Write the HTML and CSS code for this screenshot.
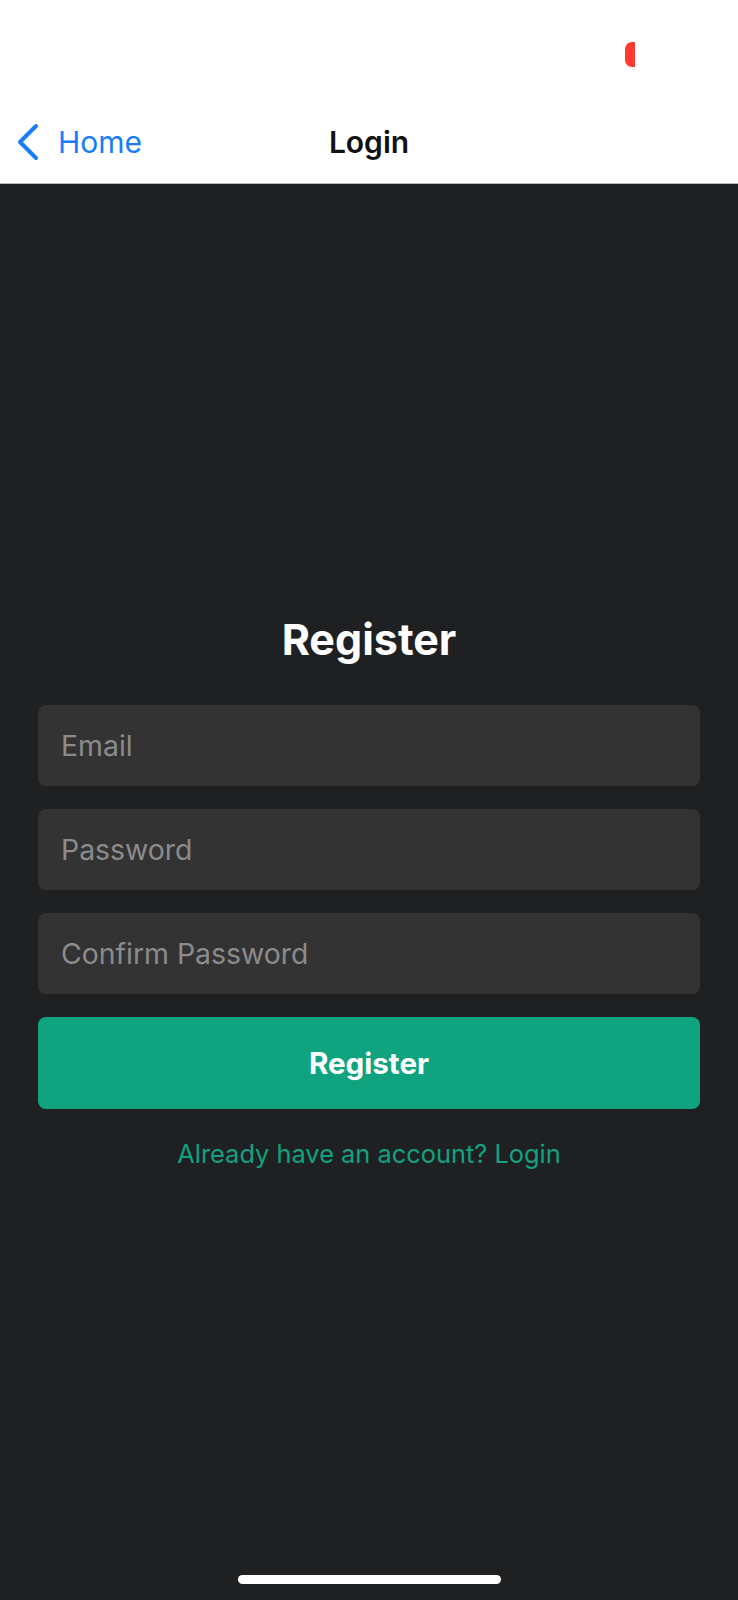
FILE: index.html
```html
<!DOCTYPE html>
<html lang="en">
<head>
<meta charset="utf-8">
<title>Login</title>
<link rel="stylesheet" href="styles.css">
</head>
<body>
<div class="screen">
  <header class="header">
    <div class="status-bar">
      <span class="rec-pill"></span>
    </div>
    <nav class="nav-bar">
      <a class="back" href="#">
        <svg class="chevron" width="26" height="40" viewBox="0 0 26 40" aria-hidden="true">
          <path d="M21 4 L5 20 L21 36" fill="none" stroke="#1a7df5" stroke-width="4" stroke-linecap="round" stroke-linejoin="round"/>
        </svg>
        <span class="back-label">Home</span>
      </a>
      <div class="nav-title">Login</div>
      <div class="nav-spacer"></div>
    </nav>
  </header>
  <main class="main">
    <form class="form">
      <h1 class="form-title">Register</h1>
      <input class="field" type="email" placeholder="Email">
      <input class="field" type="password" placeholder="Password">
      <input class="field" type="password" placeholder="Confirm Password">
      <button class="btn" type="button">Register</button>
      <a class="switch-link" href="#">Already have an account? Login</a>
    </form>
    <div class="home-indicator"></div>
  </main>
</div>
</body>
</html>
```
FILE: styles.css
```css
* { box-sizing: border-box; }
html, body { margin: 0; padding: 0; }
body {
  width: 738px;
  height: 1600px;
  background: #1f2022;
  font-family: Inter, "Noto Sans", "Liberation Sans", sans-serif;
  overflow: hidden;
}
.screen {
  display: flex;
  flex-direction: column;
  height: 1600px;
}
.header {
  background: #ffffff;
  border-bottom: 1px solid #b9b9bb;
  height: 184px;
  display: flex;
  flex-direction: column;
}
.status-bar {
  height: 95px;
  display: flex;
  justify-content: flex-end;
  align-items: flex-start;
  padding-top: 42px;
  padding-right: 103px;
}
.rec-pill {
  display: block;
  width: 10px;
  height: 25px;
  background: #ff3b30;
  border-radius: 7px 0 0 7px;
}
.nav-bar {
  flex: 1;
  display: grid;
  grid-template-columns: 1fr auto 1fr;
  align-items: center;
  padding-top: 5px;
}
.back {
  display: flex;
  align-items: center;
  gap: 17px;
  padding-left: 15px;
  text-decoration: none;
  color: #1a7df5;
}
.chevron { display: block; }
.back-label {
  font-size: 30px;
  line-height: 36px;
  font-weight: 400;
}
.nav-title {
  font-size: 30px;
  line-height: 36px;
  font-weight: 600;
  color: #111111;
}
.main {
  flex: 1;
  display: flex;
  flex-direction: column;
  padding: 430px 38px 16px;
}
.form {
  display: flex;
  flex-direction: column;
  gap: 23px;
}
.form-title {
  margin: 0 0 18px;
  text-align: center;
  color: #ffffff;
  font-size: 43px;
  line-height: 50px;
  font-weight: 700;
}
.field {
  height: 81px;
  width: 100%;
  border: none;
  outline: none;
  border-radius: 8px;
  background: #333334;
  padding: 0 23px;
  font-family: inherit;
  font-size: 28.4px;
  color: #ffffff;
}
.field::placeholder { color: #8b8b8c; }
.btn {
  height: 92px;
  width: 100%;
  border: none;
  border-radius: 8px;
  background: #10a37f;
  color: #ffffff;
  font-family: inherit;
  font-size: 29.6px;
  font-weight: 700;
}
.switch-link {
  margin-top: 6px;
  text-align: center;
  color: #10a37f;
  text-decoration: none;
  font-size: 25.4px;
  line-height: 32px;
}
.home-indicator {
  margin: auto auto 0;
  width: 263px;
  height: 9px;
  border-radius: 5px;
  background: #ffffff;
}
```
